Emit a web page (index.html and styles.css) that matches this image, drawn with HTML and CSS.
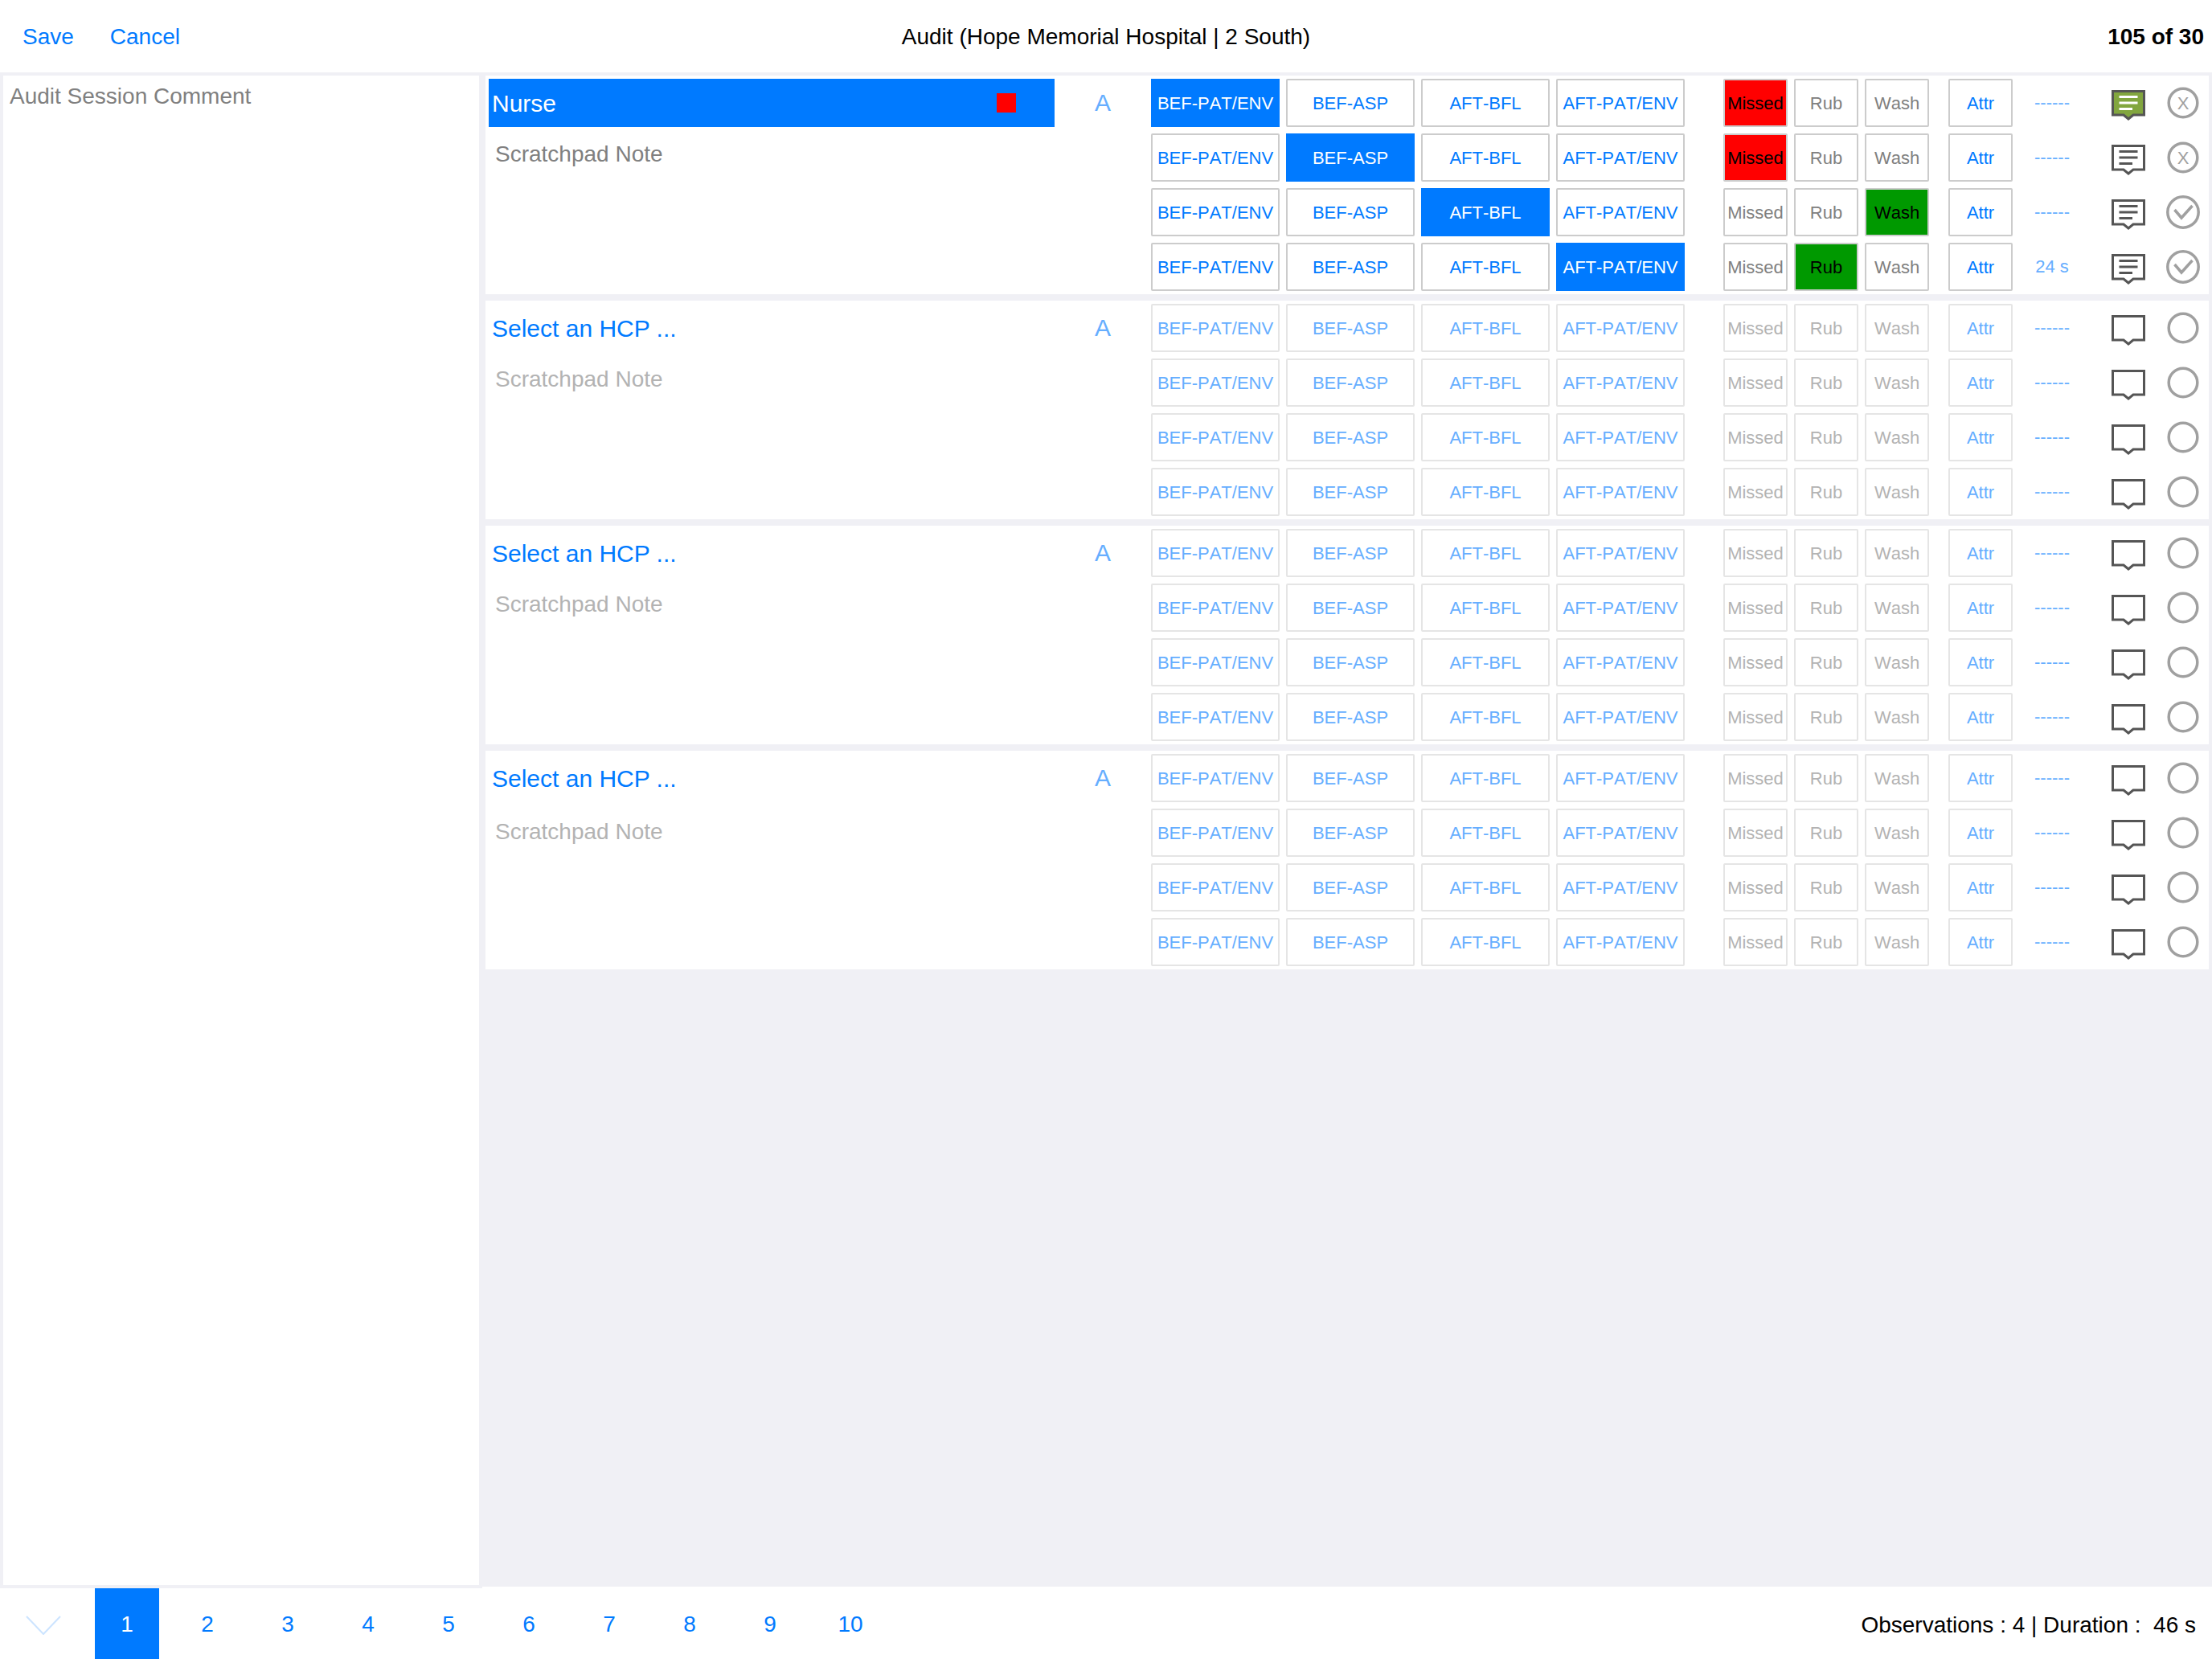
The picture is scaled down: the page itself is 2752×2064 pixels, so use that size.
FILE: index.html
```html
<!DOCTYPE html>
<html lang="en">
<head>
    <meta charset="UTF-8">
    <meta name="viewport" content="width=device-width, initial-scale=1.0">
    <title>Audit</title>
    <link rel="stylesheet" href="styles.css">
</head>
<body>
    <svg class="sprites" width="0" height="0">
        <symbol id="bubble" viewBox="0 0 44 44">
            <path d="M2.5 7.5H41.5V37H28L22 42L16 37H2.5Z" fill="#fff" stroke="#555" stroke-width="3"/>
        </symbol>
        <symbol id="bubble-lines" viewBox="0 0 44 44">
            <path d="M2.5 7.5H41.5V37H28L22 42L16 37H2.5Z" fill="#fff" stroke="#555" stroke-width="3"/>
            <path d="M10.5 14.5H33.5M10.5 22H33.5M10.5 29.5H27" fill="none" stroke="#555" stroke-width="3"/>
        </symbol>
        <symbol id="bubble-on" viewBox="0 0 44 44">
            <path d="M2.5 7.5H41.5V37H28L22 42L16 37H2.5Z" fill="#82a63f" stroke="#555" stroke-width="3"/>
            <path d="M10.5 14.5H33.5M10.5 22H33.5M10.5 29.5H27" fill="none" stroke="#fff" stroke-width="3"/>
        </symbol>
        <symbol id="ring" viewBox="0 0 44 44">
            <circle cx="22" cy="22" r="17.8" fill="none" stroke="#a0a0a0" stroke-width="3.5"/>
        </symbol>
        <symbol id="ring-check" viewBox="0 0 44 44">
            <circle cx="22" cy="22" r="19.2" fill="none" stroke="#a0a0a0" stroke-width="3.5"/>
            <path d="M11.5 19L20 29L33.5 14" fill="none" stroke="#a0a0a0" stroke-width="3.5"/>
        </symbol>
    </svg>

    <div class="top-bar">
        <div class="top-links"><a>Save</a><a>Cancel</a></div>
        <div class="top-title">Audit (Hope Memorial Hospital | 2 South)</div>
        <div class="top-count">105 of 30</div>
    </div>

    <div class="main">
        <div class="session-comment">Audit Session Comment</div>
        <div class="cards">

            <div class="card">
                <div class="who">
                    <div class="hcp hcp-on">Nurse<span class="flag"></span></div>
                    <div class="note">Scratchpad Note</div>
                </div>
                <div class="letter">A</div>
                <div class="rows">
                    <div class="row">
                        <div class="moments"><span class="btn on">BEF-PAT/ENV</span><span class="btn">BEF-ASP</span><span class="btn">AFT-BFL</span><span class="btn">AFT-PAT/ENV</span></div>
                        <div class="actions"><span class="btn gray red">Missed</span><span class="btn gray">Rub</span><span class="btn gray">Wash</span></div>
                        <span class="btn attr">Attr</span>
                        <span class="time">------</span>
                        <svg class="icon icon-note"><use href="#bubble-on"/></svg>
                        <svg class="icon" viewBox="0 0 44 44"><use href="#ring" width="44" height="44"/><text class="ring-x" x="22" y="30">X</text></svg>
                    </div>
                    <div class="row">
                        <div class="moments"><span class="btn">BEF-PAT/ENV</span><span class="btn on">BEF-ASP</span><span class="btn">AFT-BFL</span><span class="btn">AFT-PAT/ENV</span></div>
                        <div class="actions"><span class="btn gray red">Missed</span><span class="btn gray">Rub</span><span class="btn gray">Wash</span></div>
                        <span class="btn attr">Attr</span>
                        <span class="time">------</span>
                        <svg class="icon icon-note"><use href="#bubble-lines"/></svg>
                        <svg class="icon" viewBox="0 0 44 44"><use href="#ring" width="44" height="44"/><text class="ring-x" x="22" y="30">X</text></svg>
                    </div>
                    <div class="row">
                        <div class="moments"><span class="btn">BEF-PAT/ENV</span><span class="btn">BEF-ASP</span><span class="btn on">AFT-BFL</span><span class="btn">AFT-PAT/ENV</span></div>
                        <div class="actions"><span class="btn gray">Missed</span><span class="btn gray">Rub</span><span class="btn gray green">Wash</span></div>
                        <span class="btn attr">Attr</span>
                        <span class="time">------</span>
                        <svg class="icon icon-note"><use href="#bubble-lines"/></svg>
                        <svg class="icon"><use href="#ring-check"/></svg>
                    </div>
                    <div class="row">
                        <div class="moments"><span class="btn">BEF-PAT/ENV</span><span class="btn">BEF-ASP</span><span class="btn">AFT-BFL</span><span class="btn on">AFT-PAT/ENV</span></div>
                        <div class="actions"><span class="btn gray">Missed</span><span class="btn gray green">Rub</span><span class="btn gray">Wash</span></div>
                        <span class="btn attr">Attr</span>
                        <span class="time">24 s</span>
                        <svg class="icon icon-note"><use href="#bubble-lines"/></svg>
                        <svg class="icon"><use href="#ring-check"/></svg>
                    </div>
                </div>
            </div>

            <div class="card idle">
                <div class="who">
                    <div class="hcp">Select an HCP ...</div>
                    <div class="note">Scratchpad Note</div>
                </div>
                <div class="letter">A</div>
                <div class="rows">
                    <div class="row">
                        <div class="moments"><span class="btn">BEF-PAT/ENV</span><span class="btn">BEF-ASP</span><span class="btn">AFT-BFL</span><span class="btn">AFT-PAT/ENV</span></div>
                        <div class="actions"><span class="btn gray">Missed</span><span class="btn gray">Rub</span><span class="btn gray">Wash</span></div>
                        <span class="btn attr">Attr</span><span class="time">------</span>
                        <svg class="icon icon-note"><use href="#bubble"/></svg><svg class="icon"><use href="#ring"/></svg>
                    </div>
                    <div class="row">
                        <div class="moments"><span class="btn">BEF-PAT/ENV</span><span class="btn">BEF-ASP</span><span class="btn">AFT-BFL</span><span class="btn">AFT-PAT/ENV</span></div>
                        <div class="actions"><span class="btn gray">Missed</span><span class="btn gray">Rub</span><span class="btn gray">Wash</span></div>
                        <span class="btn attr">Attr</span><span class="time">------</span>
                        <svg class="icon icon-note"><use href="#bubble"/></svg><svg class="icon"><use href="#ring"/></svg>
                    </div>
                    <div class="row">
                        <div class="moments"><span class="btn">BEF-PAT/ENV</span><span class="btn">BEF-ASP</span><span class="btn">AFT-BFL</span><span class="btn">AFT-PAT/ENV</span></div>
                        <div class="actions"><span class="btn gray">Missed</span><span class="btn gray">Rub</span><span class="btn gray">Wash</span></div>
                        <span class="btn attr">Attr</span><span class="time">------</span>
                        <svg class="icon icon-note"><use href="#bubble"/></svg><svg class="icon"><use href="#ring"/></svg>
                    </div>
                    <div class="row">
                        <div class="moments"><span class="btn">BEF-PAT/ENV</span><span class="btn">BEF-ASP</span><span class="btn">AFT-BFL</span><span class="btn">AFT-PAT/ENV</span></div>
                        <div class="actions"><span class="btn gray">Missed</span><span class="btn gray">Rub</span><span class="btn gray">Wash</span></div>
                        <span class="btn attr">Attr</span><span class="time">------</span>
                        <svg class="icon icon-note"><use href="#bubble"/></svg><svg class="icon"><use href="#ring"/></svg>
                    </div>
                </div>
            </div>

            <div class="card idle">
                <div class="who">
                    <div class="hcp">Select an HCP ...</div>
                    <div class="note">Scratchpad Note</div>
                </div>
                <div class="letter">A</div>
                <div class="rows">
                    <div class="row">
                        <div class="moments"><span class="btn">BEF-PAT/ENV</span><span class="btn">BEF-ASP</span><span class="btn">AFT-BFL</span><span class="btn">AFT-PAT/ENV</span></div>
                        <div class="actions"><span class="btn gray">Missed</span><span class="btn gray">Rub</span><span class="btn gray">Wash</span></div>
                        <span class="btn attr">Attr</span><span class="time">------</span>
                        <svg class="icon icon-note"><use href="#bubble"/></svg><svg class="icon"><use href="#ring"/></svg>
                    </div>
                    <div class="row">
                        <div class="moments"><span class="btn">BEF-PAT/ENV</span><span class="btn">BEF-ASP</span><span class="btn">AFT-BFL</span><span class="btn">AFT-PAT/ENV</span></div>
                        <div class="actions"><span class="btn gray">Missed</span><span class="btn gray">Rub</span><span class="btn gray">Wash</span></div>
                        <span class="btn attr">Attr</span><span class="time">------</span>
                        <svg class="icon icon-note"><use href="#bubble"/></svg><svg class="icon"><use href="#ring"/></svg>
                    </div>
                    <div class="row">
                        <div class="moments"><span class="btn">BEF-PAT/ENV</span><span class="btn">BEF-ASP</span><span class="btn">AFT-BFL</span><span class="btn">AFT-PAT/ENV</span></div>
                        <div class="actions"><span class="btn gray">Missed</span><span class="btn gray">Rub</span><span class="btn gray">Wash</span></div>
                        <span class="btn attr">Attr</span><span class="time">------</span>
                        <svg class="icon icon-note"><use href="#bubble"/></svg><svg class="icon"><use href="#ring"/></svg>
                    </div>
                    <div class="row">
                        <div class="moments"><span class="btn">BEF-PAT/ENV</span><span class="btn">BEF-ASP</span><span class="btn">AFT-BFL</span><span class="btn">AFT-PAT/ENV</span></div>
                        <div class="actions"><span class="btn gray">Missed</span><span class="btn gray">Rub</span><span class="btn gray">Wash</span></div>
                        <span class="btn attr">Attr</span><span class="time">------</span>
                        <svg class="icon icon-note"><use href="#bubble"/></svg><svg class="icon"><use href="#ring"/></svg>
                    </div>
                </div>
            </div>

            <div class="card idle">
                <div class="who">
                    <div class="hcp">Select an HCP ...</div>
                    <div class="note note-low">Scratchpad Note</div>
                </div>
                <div class="letter">A</div>
                <div class="rows">
                    <div class="row">
                        <div class="moments"><span class="btn">BEF-PAT/ENV</span><span class="btn">BEF-ASP</span><span class="btn">AFT-BFL</span><span class="btn">AFT-PAT/ENV</span></div>
                        <div class="actions"><span class="btn gray">Missed</span><span class="btn gray">Rub</span><span class="btn gray">Wash</span></div>
                        <span class="btn attr">Attr</span><span class="time">------</span>
                        <svg class="icon icon-note"><use href="#bubble"/></svg><svg class="icon"><use href="#ring"/></svg>
                    </div>
                    <div class="row">
                        <div class="moments"><span class="btn">BEF-PAT/ENV</span><span class="btn">BEF-ASP</span><span class="btn">AFT-BFL</span><span class="btn">AFT-PAT/ENV</span></div>
                        <div class="actions"><span class="btn gray">Missed</span><span class="btn gray">Rub</span><span class="btn gray">Wash</span></div>
                        <span class="btn attr">Attr</span><span class="time">------</span>
                        <svg class="icon icon-note"><use href="#bubble"/></svg><svg class="icon"><use href="#ring"/></svg>
                    </div>
                    <div class="row">
                        <div class="moments"><span class="btn">BEF-PAT/ENV</span><span class="btn">BEF-ASP</span><span class="btn">AFT-BFL</span><span class="btn">AFT-PAT/ENV</span></div>
                        <div class="actions"><span class="btn gray">Missed</span><span class="btn gray">Rub</span><span class="btn gray">Wash</span></div>
                        <span class="btn attr">Attr</span><span class="time">------</span>
                        <svg class="icon icon-note"><use href="#bubble"/></svg><svg class="icon"><use href="#ring"/></svg>
                    </div>
                    <div class="row">
                        <div class="moments"><span class="btn">BEF-PAT/ENV</span><span class="btn">BEF-ASP</span><span class="btn">AFT-BFL</span><span class="btn">AFT-PAT/ENV</span></div>
                        <div class="actions"><span class="btn gray">Missed</span><span class="btn gray">Rub</span><span class="btn gray">Wash</span></div>
                        <span class="btn attr">Attr</span><span class="time">------</span>
                        <svg class="icon icon-note"><use href="#bubble"/></svg><svg class="icon"><use href="#ring"/></svg>
                    </div>
                </div>
            </div>

        </div>
    </div>

    <div class="bottom-bar">
        <svg class="chevron" viewBox="0 0 44 24"><path d="M1 1L22 23L43 1" fill="none" stroke="#cce4ff" stroke-width="2"/></svg>
        <div class="pager">
            <a class="page on">1</a>
            <a class="page">2</a>
            <a class="page">3</a>
            <a class="page">4</a>
            <a class="page">5</a>
            <a class="page">6</a>
            <a class="page">7</a>
            <a class="page">8</a>
            <a class="page">9</a>
            <a class="page">10</a>
        </div>
        <div class="totals">Observations : 4 | Duration :&nbsp; 46 s</div>
    </div>
</body>
</html>
```

FILE: styles.css
```css
* {
    box-sizing: border-box;
}
body {
    margin: 0;
    width: 2752px;
    height: 2064px;
    overflow: hidden;
    display: flex;
    flex-direction: column;
    background-color: #f0f0f5;
    font-family: "Liberation Sans", Arial, sans-serif;
    font-size: 28px;
    color: #000;
}
.sprites {
    position: absolute;
}

/* Top bar */
.top-bar {
    height: 90px;
    line-height: 92px;
    background-color: #fff;
    display: grid;
    grid-template-columns: 1fr auto 1fr;
    padding: 0 10px;
}
.top-links {
    display: flex;
    gap: 45px;
    padding-left: 18px;
    color: #007aff;
}
.top-count {
    text-align: right;
    font-weight: bold;
}

/* Main area */
.main {
    flex: 1;
    min-height: 0;
    display: flex;
    gap: 8px;
    padding: 4px 4px 2px;
}
.session-comment {
    width: 592px;
    background-color: #fff;
    padding: 0 8px;
    line-height: 51px;
    color: #808080;
}
.cards {
    flex: 1;
    display: flex;
    flex-direction: column;
    gap: 8px;
}
.card {
    height: 272px;
    background-color: #fff;
    display: flex;
    padding: 4px 0 4px 4px;
}
.who {
    width: 704px;
}
.hcp {
    height: 60px;
    line-height: 62px;
    padding: 0 48px 0 4px;
    font-size: 30px;
    color: #007aff;
    display: flex;
    justify-content: space-between;
    align-items: flex-start;
}
.hcp-on {
    background-color: #007aff;
    color: #fff;
}
.flag {
    width: 24px;
    height: 24px;
    margin-top: 18px;
    background-color: #f00;
}
.note {
    margin-top: 17px;
    padding-left: 8px;
    line-height: 34px;
    color: #808080;
}
.idle .note {
    color: #b3b3b3;
}
.note-low {
    margin-top: 20px;
}
.letter {
    width: 120px;
    height: 60px;
    line-height: 60px;
    text-align: center;
    font-size: 30px;
    color: #66aeff;
}
.rows {
    display: flex;
    flex-direction: column;
    gap: 8px;
}
.row {
    display: flex;
    align-items: center;
    height: 60px;
}
.moments {
    display: flex;
    gap: 8px;
    margin-right: 48px;
}
.actions {
    display: flex;
    gap: 8px;
    margin-right: 24px;
}

/* Buttons */
.btn {
    display: block;
    width: 160px;
    height: 60px;
    line-height: 57px;
    text-align: center;
    white-space: nowrap;
    font-size: 22px;
    font-kerning: none;
    color: #007aff;
    background-color: #fff;
    border: 2px solid #ccc;
    border-radius: 2px;
}
.btn.on {
    background-color: #007aff;
    border-color: #007aff;
    border-radius: 0;
    color: #fff;
}
.btn.gray,
.btn.attr {
    width: 80px;
}
.btn.gray {
    color: #808080;
}
.btn.red {
    background-color: #f00;
    color: #000;
}
.btn.green {
    background-color: #009900;
    color: #000;
}
.idle .btn {
    border-color: #e5e5e5;
    color: #66aeff;
}
.idle .btn.gray {
    color: #b3b3b3;
}
.time {
    width: 98px;
    text-align: center;
    font-size: 22px;
    color: #66aeff;
    margin-right: 24px;
}
.icon {
    width: 44px;
    height: 44px;
    flex: none;
}
.icon-note {
    margin-right: 24px;
}
.ring-x {
    font-family: "Liberation Sans", Arial, sans-serif;
    font-size: 22px;
    text-anchor: middle;
    fill: #a0a0a0;
}

/* Bottom bar */
.bottom-bar {
    position: relative;
    height: 90px;
    padding-top: 2px;
    background-color: #fff;
    display: flex;
    align-items: stretch;
}
.bottom-bar::before {
    content: "";
    position: absolute;
    left: 0;
    top: 0;
    width: 600px;
    height: 2px;
    background-color: #f0f0f5;
}
.chevron {
    width: 44px;
    height: 24px;
    margin: 34px 42px 0 32px;
}
.pager {
    display: flex;
    gap: 20px;
}
.page {
    width: 80px;
    line-height: 90px;
    text-align: center;
    color: #007aff;
}
.page.on {
    background-color: #007aff;
    color: #fff;
}
.totals {
    margin-left: auto;
    padding-right: 20px;
    line-height: 91px;
}
```
